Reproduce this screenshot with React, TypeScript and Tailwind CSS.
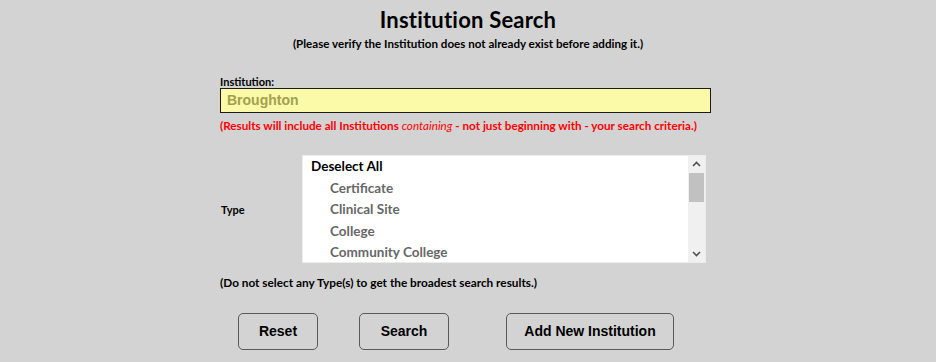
import React from 'react'

const types = ['Certificate', 'Clinical Site', 'College', 'Community College']

export default function App() {
  return (
    <div className="w-full h-[362px] bg-[#d3d3d3] overflow-hidden font-['Lato',sans-serif] font-bold text-black">
      <h1 className="pt-[7px] text-center text-[22px] leading-[26px] tracking-[0.2px]">Institution Search</h1>
      <p className="mt-[4px] text-center text-[11.6px] leading-[14px]">
        (Please verify the Institution does not already exist before adding it.)
      </p>

      <div className="ml-[220px] w-[491px] mt-[24px]">
        <label className="block text-[11px] leading-[13px]">Institution:</label>
        <div className="h-[25px] border border-[#1c1c1c] bg-[#fafaa8] flex items-center pl-[6px] font-['Liberation_Sans',sans-serif] text-[14px] text-[#a3a04e]">
          Broughton
        </div>
        <p className="mt-[5px] text-[11.7px] leading-[14px] text-[#ff0000] whitespace-nowrap">
          (Results will include all Institutions <span className="italic font-normal">containing</span> - not just beginning with - your search criteria.)
        </p>

        <div className="mt-[23px] flex items-center">
          <span className="w-[82px] pl-[1px] pt-[3px] text-[11px]">Type</span>
          <div className="w-[404px] h-[108px] bg-white border border-[#ececec] flex">
            <ul className="flex-1 overflow-hidden pl-[8px] text-[13.5px]">
              <li className="leading-[21.5px] text-black">Deselect All</li>
              {types.map(t => (
                <li key={t} className="leading-[21.5px] pl-[19px] text-[#676767]">{t}</li>
              ))}
            </ul>
            <div className="w-[17px] bg-[#f0f0f0] flex flex-col items-center">
              <svg width="17" height="17" viewBox="0 0 17 17" className="shrink-0">
                <path d="M5 10 L8.5 6.5 L12 10" stroke="#505050" strokeWidth="1.6" fill="none" />
              </svg>
              <div className="w-[15px] h-[29px] bg-[#c1c1c1]" />
              <div className="flex-1" />
              <svg width="17" height="17" viewBox="0 0 17 17" className="shrink-0">
                <path d="M5 7 L8.5 10.5 L12 7" stroke="#505050" strokeWidth="1.6" fill="none" />
              </svg>
            </div>
          </div>
        </div>

        <p className="mt-[13px] text-[11.8px] leading-[14px]">(Do not select any Type(s) to get the broadest search results.)</p>
      </div>

      <div className="mt-[23px] flex font-['Liberation_Sans',sans-serif] text-[14px]">
        <button className="ml-[238px] w-[80px] h-[37px] rounded-[5px] border border-[#5a5a5a] bg-[#d3d3d3] font-bold">Reset</button>
        <button className="ml-[41px] w-[90px] h-[37px] rounded-[5px] border border-[#5a5a5a] bg-[#d3d3d3] font-bold">Search</button>
        <button className="ml-[57px] w-[168px] h-[37px] rounded-[5px] border border-[#5a5a5a] bg-[#d3d3d3] font-bold">Add New Institution</button>
      </div>
    </div>
  )
}
